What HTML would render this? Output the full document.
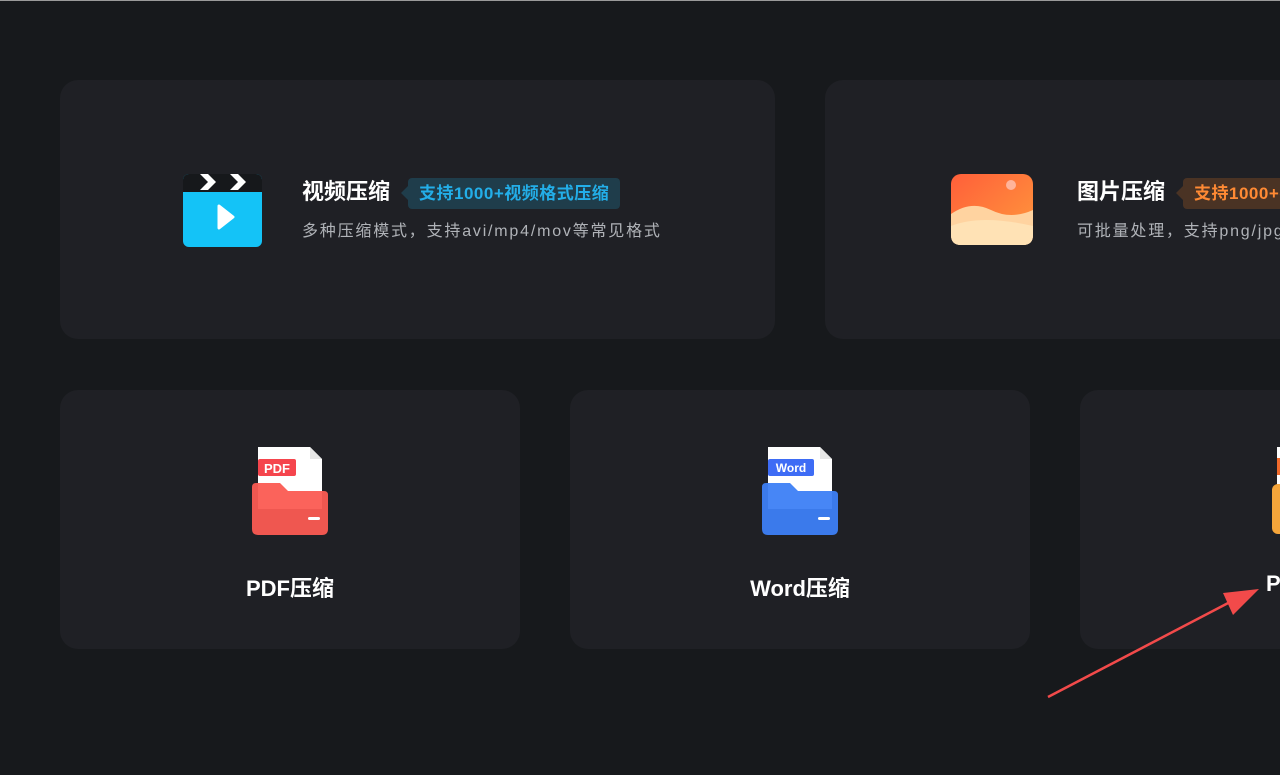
<!DOCTYPE html>
<html style="overflow:hidden"><head><meta charset="utf-8"><style>
*{margin:0;padding:0;box-sizing:border-box}
body{width:1280px;height:775px;background:#17191c;position:relative;overflow:hidden;font-family:"Liberation Sans","Noto Sans CJK SC",sans-serif;border-top:1px solid #9a9a9a}
.card{position:absolute;background:#1f2025;border-radius:18px}
.t{position:absolute;color:#fff;font-weight:bold;font-size:22px;white-space:nowrap}
.s{position:absolute;color:#b0b3b8;font-size:16px;letter-spacing:1.8px;white-space:nowrap}
.tag{position:absolute;height:31px;line-height:31px;font-size:17px;letter-spacing:0.5px;font-weight:bold;padding:0 11px;border-radius:4px;white-space:nowrap}
.tag:before{content:"";position:absolute;left:-7px;top:8px;border:7px solid transparent;border-left:0;border-right-color:inherit}
.b{position:absolute;color:#fff;font-weight:bold;font-size:22px;white-space:nowrap;text-align:center}
</style></head><body>
<div class="card" style="left:60px;top:79px;width:715px;height:259px"></div>
<div class="card" style="left:825px;top:79px;width:455px;height:259px;border-radius:18px 0 0 18px"></div>
<div class="card" style="left:60px;top:389px;width:460px;height:259px"></div>
<div class="card" style="left:570px;top:389px;width:460px;height:259px"></div>
<div class="card" style="left:1080px;top:389px;width:200px;height:259px;border-radius:18px 0 0 18px"></div>

<svg style="position:absolute;left:183px;top:171px" width="79" height="75" viewBox="0 0 79 75">
<rect x="0" y="2" width="79" height="73" rx="6" fill="#14c3f7"/>
<rect x="0" y="2" width="79" height="18" rx="6" fill="#16181b"/>
<rect x="0" y="14" width="79" height="6" fill="#16181b"/>
<path d="M17 2l8 0l8 8l-8 8h-8l8-8z" fill="#fff"/><path d="M47 2l8 0l8 8l-8 8h-8l8-8z" fill="#fff"/>
<path d="M36 34l14 11l-14 11z" fill="#fff" stroke="#fff" stroke-width="3" stroke-linejoin="round"/>
</svg>
<div class="t" style="left:302px;top:173px">视频压缩</div>
<div class="tag" style="left:408px;top:177px;background:#1f3d4b;color:#23aee8;border-color:#1f3d4b">支持1000+视频格式压缩</div>
<div class="s" style="left:302px;top:216px">多种压缩模式，支持avi/mp4/mov等常见格式</div>

<svg style="position:absolute;left:951px;top:173px" width="82" height="71" viewBox="0 0 82 71">
<defs><linearGradient id="g1" x1="0" y1="0" x2="1" y2="1"><stop offset="0" stop-color="#ff5f3a"/><stop offset="1" stop-color="#ff9a3c"/></linearGradient></defs>
<rect width="82" height="71" rx="10" fill="url(#g1)"/>
<circle cx="60" cy="11" r="5" fill="#ffb49a"/>
<path d="M0 40q20-14 40-4t42 0v25q0 10-10 10h-62q-10 0-10-10z" fill="#ffd3a0"/>
<path d="M0 52q30-12 82 0v9q0 10-10 10h-62q-10 0-10-10z" fill="#ffe2b5"/>
</svg>
<div class="t" style="left:1077px;top:173px">图片压缩</div>
<div class="tag" style="left:1183px;top:177px;background:#4a3324;color:#ff8a34;border-color:#4a3324">支持1000+视频格式压缩</div>
<div class="s" style="left:1077px;top:216px">可批量处理，支持png/jpg等常见格式</div>

<svg style="position:absolute;left:252px;top:446px" width="76" height="88" viewBox="0 0 76 88">
<path d="M6 0h52l12 12v50h-64z" fill="#fff"/><path d="M58 0v12h12z" fill="#e6e6e6"/>
<rect x="6" y="12" width="38" height="17" rx="2" fill="#f5454d"/>
<text x="25" y="26" font-family="Liberation Sans" font-weight="bold" font-size="13" fill="#fff" text-anchor="middle">PDF</text>
<path d="M0 40q0-4 4-4h24l8 8h36q4 0 4 4v34q0 6-6 6h-64q-6 0-6-6z" fill="#fb5b52" opacity=".95"/>
<rect x="56" y="70" width="12" height="3" rx="1.5" fill="#fff"/>
</svg>
<div class="b" style="left:60px;width:460px;top:570px">PDF压缩</div>

<svg style="position:absolute;left:762px;top:446px" width="76" height="88" viewBox="0 0 76 88">
<path d="M6 0h52l12 12v50h-64z" fill="#fff"/><path d="M58 0v12h12z" fill="#e6e6e6"/>
<rect x="6" y="12" width="46" height="17" rx="2" fill="#3e6cf5"/>
<text x="29" y="25" font-family="Liberation Sans" font-weight="bold" font-size="12" fill="#fff" text-anchor="middle">Word</text>
<path d="M0 40q0-4 4-4h24l8 8h36q4 0 4 4v34q0 6-6 6h-64q-6 0-6-6z" fill="#3d7ff6" opacity=".95"/>
<rect x="56" y="70" width="12" height="3" rx="1.5" fill="#fff"/>
</svg>
<div class="b" style="left:570px;width:460px;top:570px">Word压缩</div>

<div style="position:absolute;left:1277px;top:446px;width:3px;height:62px;background:#fff"></div>
<div style="position:absolute;left:1277px;top:457px;width:3px;height:17px;background:#f26b2c"></div>
<div style="position:absolute;left:1272px;top:483px;width:8px;height:50px;background:#f5a53a;border-radius:6px 0 0 6px"></div>
<div class="b" style="left:1266px;top:570px;width:14px;overflow:hidden;text-align:left">P</div>

<svg style="position:absolute;left:0;top:0" width="1280" height="775">
<path d="M1048 696L1232 600" stroke="#f24a4a" stroke-width="2.5"/>
<path d="M1259 588L1223 592L1233 614z" fill="#f24a4a"/>
</svg>
</body></html>
